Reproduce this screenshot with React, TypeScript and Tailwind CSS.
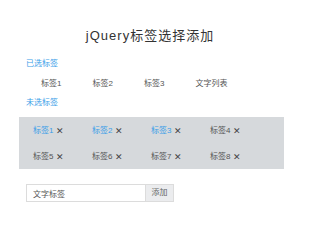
import { useState } from "react";

const selected = ["标签1", "标签2", "标签3", "文字列表"];
const pool = ["标签1", "标签2", "标签3", "标签4", "标签5", "标签6", "标签7", "标签8"];

export default function App() {
  const [text, setText] = useState("文字标签");
  const picked = ["标签1", "标签2", "标签3"];

  return (
    <div
      className="w-[300px] h-[229px] bg-white overflow-hidden text-[#555]"
      style={{ fontFamily: '"Liberation Sans", "Noto Sans CJK SC", sans-serif' }}>
      <h1 className="pt-[28px] text-center text-[13px] leading-[16px] tracking-[1px] text-[#333] font-normal">
        jQuery标签选择添加
      </h1>
      <div className="px-[26px]">
        <div className="mt-[15px] text-[8px] leading-[10px] text-[#3a9ee8]">已选标签</div>
        <div className="mt-[10px] pl-[15px] flex text-[8px] leading-[10px]">
          {selected.map((t) => (
            <span key={t} className="w-[51.5px] shrink-0">
              {t}
            </span>
          ))}
        </div>
        <div className="mt-[9px] text-[8px] leading-[10px] text-[#3a9ee8]">未选标签</div>
        <div className="mt-[9px] -ml-[7px] w-[265px] h-[52px] bg-[#d6d9dc] pl-[14px] pt-[9px] grid grid-cols-[59px_59px_59px_59px] gap-y-[16px] content-start text-[8px] leading-[10px]">
          {pool.map((t) => (
            <span key={t} className="flex items-center gap-[3px]">
              <span className={picked.includes(t) ? "text-[#3a9ee8]" : "text-[#555]"}>{t}</span>
              <span className="text-[#444] text-[9px] leading-[10px]">✕</span>
            </span>
          ))}
        </div>
        <div className="mt-[15px] flex h-[18px]">
          <input
            value={text}
            onChange={(e) => setText(e.target.value)}
            className="w-[120px] h-[18px] border border-[#dcdcdc] px-[6px] text-[8px] text-[#555] outline-none"
          />
          <button
            type="button"
            className="w-[28px] h-[18px] bg-[#ebecee] border border-l-0 border-[#dcdcdc] text-[8px] text-[#666]">
            添加
          </button>
        </div>
      </div>
    </div>
  );
}
